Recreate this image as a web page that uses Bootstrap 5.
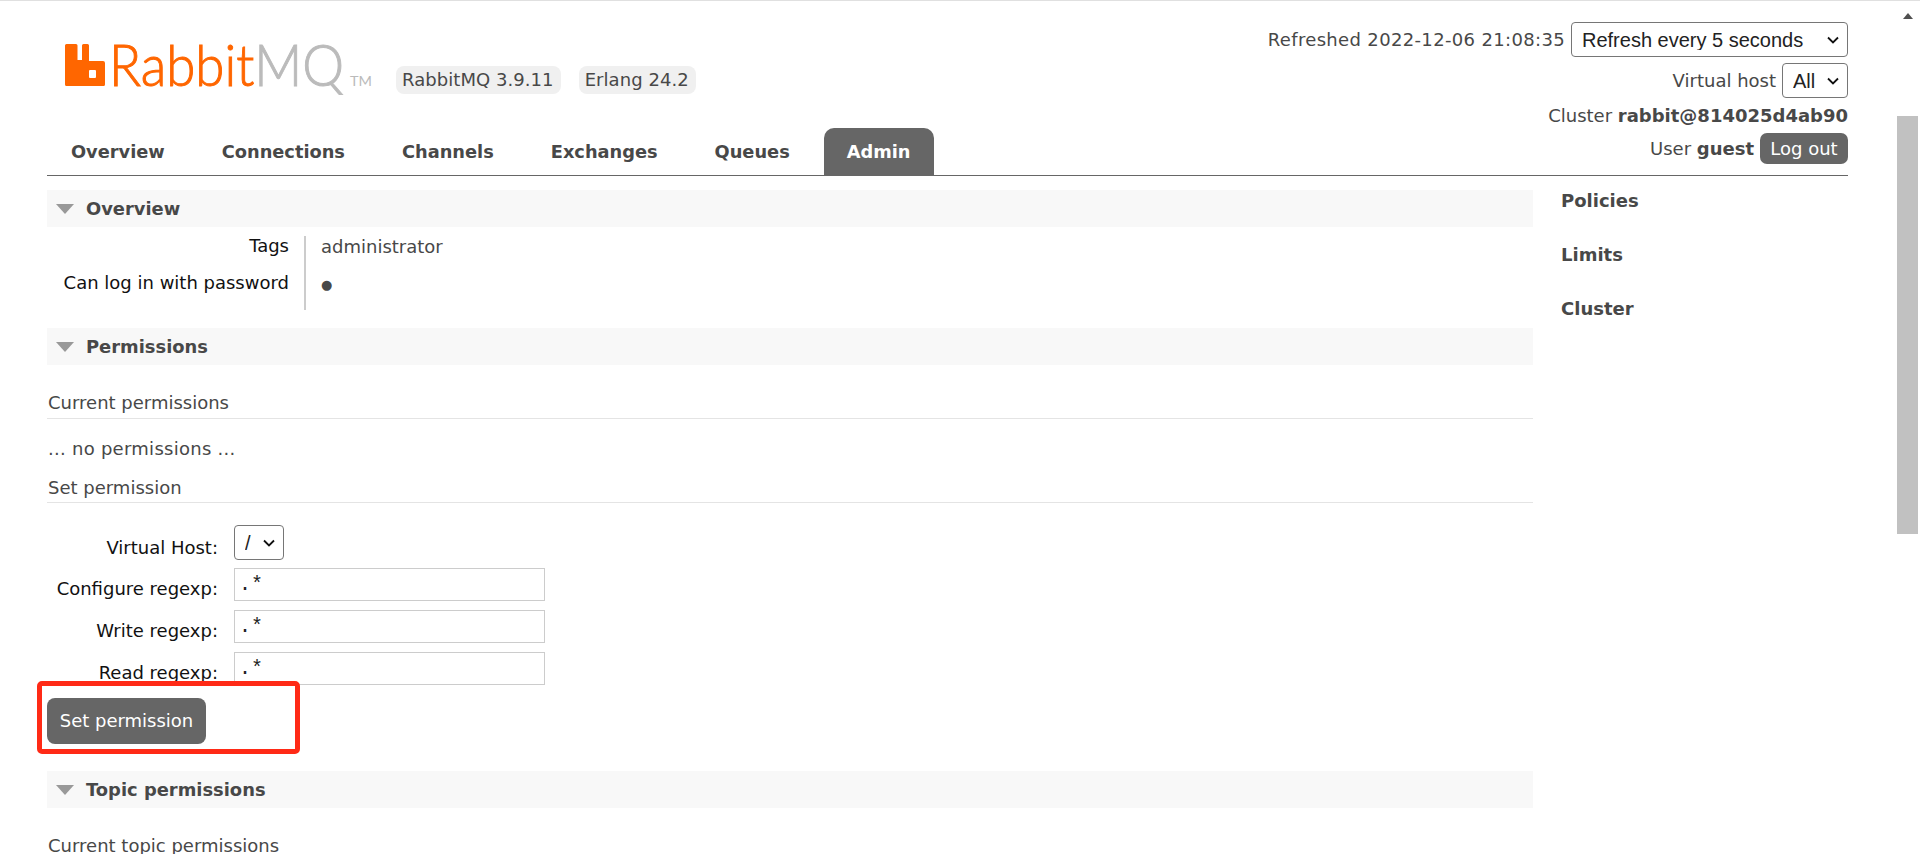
<!DOCTYPE html>
<html lang="en">

<head>
    <meta charset="UTF-8">
    <meta name="viewport" content="width=device-width, initial-scale=1.0">
    <title>RabbitMQ Management</title>
    <link href="https://cdn.jsdelivr.net/npm/bootstrap@5.3.0/dist/css/bootstrap.min.css" rel="stylesheet">
    <style>
        html,
        body {
            height: 854px;
            overflow: hidden;
        }

        body {
            font-family: "DejaVu Sans", Verdana, sans-serif;
            font-size: 18px;
            line-height: 20px;
            color: #484848;
            background: #fff;
            border-top: 1px solid #e0e0e0;
        }

        .page-area {
            width: 1897px;
            height: 853px;
            padding: 0 49px 0 47px;
            overflow: hidden;
        }

        /* header */
        .top-head {
            height: 175px;
            border-bottom: 1px solid #666;
        }

        .logo-row {
            gap: 18px;
        }

        .logo-svg {
            margin: 23px 0 0 18px;
            display: block;
        }

        .ver-tag {
            margin-top: 65px;
            height: 28px;
            line-height: 28px;
            padding: 0 7px 0 6px;
            background: #f0f0f0;
            border-radius: 8px;
            white-space: nowrap;
            letter-spacing: .06px;
        }

        .tab-list {
            list-style: none;
            margin: 0;
            padding: 0 0 0 1px;
            gap: 11px;
        }

        .tab-list a {
            display: block;
            height: 47px;
            line-height: 47px;
            padding: 0 23px;
            font-size: 17.8px;
            font-weight: 700;
            color: #484848;
            text-decoration: none;
            border-radius: 10px 10px 0 0;
        }

        .tab-list a.on {
            background: #666;
            color: #fff;
        }

        .head-right {
            padding-top: 21px;
        }

        .head-line {
            justify-content: flex-end;
            align-items: center;
            gap: 6px;
        }

        .second-line {
            margin-top: 6px;
        }

        .stamp-text {
            letter-spacing: .34px;
        }

        .native-sel {
            height: 35px;
            font-family: "Liberation Sans", Arial, sans-serif;
            font-size: 20px;
            color: #222;
            border: 1px solid #767676;
            border-radius: 4px;
            padding: 0 0 0 10px;
            appearance: none;
            background: #fff url("data:image/svg+xml,%3Csvg xmlns='http://www.w3.org/2000/svg' width='12' height='8' viewBox='0 0 12 8'%3E%3Cpath d='M1 1.500l5 5 5-5' fill='none' stroke='%23111' stroke-width='1.800'/%3E%3C/svg%3E") no-repeat right 8px center;
        }

        .sel-refresh {
            width: 277px;
        }

        .sel-all {
            width: 66px;
        }

        .sel-root {
            width: 50px;
        }

        .grey-btn {
            background: #666;
            color: #fff;
            border: 0;
            border-radius: 7px;
            font-size: 18px;
            line-height: 20px;
            padding: 0;
        }

        .grey-btn:hover {
            background: #666;
            color: #fff;
        }

        .logout-btn {
            width: 88px;
            height: 31px;
        }

        /* sections */
        .main-col {
            width: 1486px;
            flex: none;
        }

        .sec-head {
            height: 37px;
            background: #f8f8f8;
            font-size: 17.9px;
            font-weight: 700;
            padding-left: 9px;
            gap: 12px;
        }

        .tri-down {
            width: 0;
            height: 0;
            border-left: 9px solid transparent;
            border-right: 9px solid transparent;
            border-top: 10px solid #999;
        }

        .info-grid {
            margin: 9px 0 18px;
        }

        .info-keys {
            width: 259px;
            height: 74px;
            padding-right: 15px;
            border-right: 2px solid #ccc;
            text-align: right;
            color: #111;
        }

        .info-keys div:first-child {
            margin-bottom: 17px;
        }

        .info-vals {
            padding: 1px 0 0 15px;
        }

        .info-vals div:first-child {
            margin-bottom: 18px;
        }

        .yes-dot {
            font-size: 13px;
        }

        .sub-title {
            padding: 0 0 5px 1px;
            border-bottom: 1px solid #e4e4e4;
        }

        .none-text {
            margin-top: 20px;
            padding-left: 1px;
            letter-spacing: .27px;
        }

        .form-line {
            gap: 16px;
            margin-bottom: 9px;
        }

        .form-line label {
            width: 171px;
            padding-top: 11px;
            text-align: right;
            color: #111;
            white-space: nowrap;
        }

        .form-line label.vhost-label {
            padding-top: 13px;
        }

        .text-box {
            width: 311px;
            height: 33px;
            border: 1px solid #ccc;
            padding: 0 4px;
            font-family: "Liberation Mono", "Courier New", monospace;
            font-size: 20px;
            color: #222;
            outline: none;
        }

        .btn-holder {
            margin-top: 13px;
        }

        .set-btn {
            width: 159px;
            height: 46px;
            border-radius: 8px;
        }

        /* the red box drawn on top of the screenshot */
        .red-mark {
            position: absolute;
            left: -10px;
            top: -17px;
            width: 263px;
            height: 73px;
            border: 5px solid #ff2a16;
            border-radius: 5px;
        }

        .side-col {
            margin-left: 28px;
            padding-top: 15px;
        }

        .side-col a {
            display: block;
            font-weight: 700;
            color: #484848;
            text-decoration: none;
            margin-bottom: 34px;
        }

        /* fake scrollbar, the window one is hidden */
        .scroll-strip {
            top: 1px;
            right: 0;
            width: 23px;
            height: 853px;
            background: #fff;
        }

        .scroll-arrow {
            margin: 12px 0 0 6px;
            width: 0;
            height: 0;
            border-left: 5px solid transparent;
            border-right: 5px solid transparent;
            border-bottom: 6px solid #505050;
        }

        .scroll-thumb {
            margin: 97px 2px 0 0;
            height: 418px;
            background: #c1c1c1;
        }
    </style>
</head>

<body>
    <div class="page-area">
        <header class="top-head d-flex justify-content-between">
            <div class="d-flex flex-column justify-content-between">
                <div class="logo-row d-flex">
                    <svg class="logo-svg" width="313" height="76" viewBox="0 0 313 76">
                        <path fill="#f60" fill-rule="evenodd" d="M1.500 20H11a1.500 1.500 0 0 1 1.500 1.500V36H17V21.500a1.500 1.500 0 0 1 1.500-1.500h4a1.500 1.500 0 0 1 1.500 1.500V37h14a2 2 0 0 1 2 2V60.500a1.500 1.500 0 0 1-1.500 1.500H1.500A1.500 1.500 0 0 1 0 60.500v-39A1.500 1.500 0 0 1 1.500 20zM25 46h5a1 1 0 0 1 1 1v6a1 1 0 0 1-1 1h-5a1 1 0 0 1-1-1v-6a1 1 0 0 1 1-1z" />
                        <text x="44" y="62" font-family="Lato, sans-serif" font-weight="300" font-size="58" stroke-width="1" textLength="235" lengthAdjust="spacingAndGlyphs"><tspan fill="#f60" stroke="#f60">Rabbit</tspan><tspan fill="#bbb" stroke="#bbb">MQ</tspan></text>
                        <text x="285" y="62" font-family="Lato, sans-serif" font-size="14" fill="#bbb" textLength="22" lengthAdjust="spacingAndGlyphs">TM</text>
                    </svg>
                    <span class="ver-tag">RabbitMQ 3.9.11</span>
                    <span class="ver-tag">Erlang 24.2</span>
                </div>
                <ul class="tab-list d-flex">
                    <li><a href="#">Overview</a></li>
                    <li><a href="#">Connections</a></li>
                    <li><a href="#">Channels</a></li>
                    <li><a href="#">Exchanges</a></li>
                    <li><a href="#">Queues</a></li>
                    <li><a href="#" class="on">Admin</a></li>
                </ul>
            </div>
            <div class="head-right">
                <div class="head-line d-flex">
                    <span class="stamp-text">Refreshed 2022-12-06 21:08:35</span>
                    <select class="native-sel sel-refresh">
                        <option>Refresh every 5 seconds</option>
                    </select>
                </div>
                <div class="head-line second-line d-flex">
                    <span>Virtual host</span>
                    <select class="native-sel sel-all">
                        <option>All</option>
                    </select>
                </div>
                <div class="text-end" style="margin-top:8px">Cluster <b>rabbit@814025d4ab90</b></div>
                <div class="head-line d-flex" style="margin-top:7px">
                    <span>User <b>guest</b></span>
                    <button class="btn grey-btn logout-btn">Log out</button>
                </div>
            </div>
        </header>

        <div class="d-flex">
            <div class="main-col">
                <div class="sec-head d-flex align-items-center" style="margin-top:14px"><i class="tri-down"></i>Overview</div>
                <div class="info-grid d-flex">
                    <div class="info-keys">
                        <div>Tags</div>
                        <div>Can log in with password</div>
                    </div>
                    <div class="info-vals">
                        <div>administrator</div>
                        <div class="yes-dot">&#9679;</div>
                    </div>
                </div>

                <div class="sec-head d-flex align-items-center"><i class="tri-down"></i>Permissions</div>
                <div class="sub-title" style="margin-top:28px">Current permissions</div>
                <div class="none-text">... no permissions ...</div>
                <div class="sub-title" style="margin-top:19px;padding-bottom:4px">Set permission</div>

                <form style="margin-top:22px">
                    <div class="form-line d-flex" style="margin-bottom:8px">
                        <label class="vhost-label">Virtual Host:</label>
                        <select class="native-sel sel-root">
                            <option>/</option>
                        </select>
                    </div>
                    <div class="form-line d-flex">
                        <label>Configure regexp:</label>
                        <input class="text-box" type="text" value=".*">
                    </div>
                    <div class="form-line d-flex">
                        <label>Write regexp:</label>
                        <input class="text-box" type="text" value=".*">
                    </div>
                    <div class="form-line d-flex mb-0">
                        <label>Read regexp:</label>
                        <input class="text-box" type="text" value=".*">
                    </div>
                    <div class="btn-holder position-relative">
                        <button type="button" class="btn grey-btn set-btn">Set permission</button>
                        <div class="red-mark"></div>
                    </div>
                </form>

                <div class="sec-head d-flex align-items-center" style="margin-top:27px"><i class="tri-down"></i>Topic permissions</div>
                <div style="margin-top:28px;padding-left:1px">Current topic permissions</div>
            </div>
            <aside class="side-col">
                <a href="#">Policies</a>
                <a href="#">Limits</a>
                <a href="#">Cluster</a>
            </aside>
        </div>
    </div>

    <div class="scroll-strip position-fixed">
        <div class="scroll-arrow"></div>
        <div class="scroll-thumb"></div>
    </div>

    <script src="https://cdn.jsdelivr.net/npm/bootstrap@5.3.0/dist/js/bootstrap.bundle.min.js"></script>
</body>

</html>
